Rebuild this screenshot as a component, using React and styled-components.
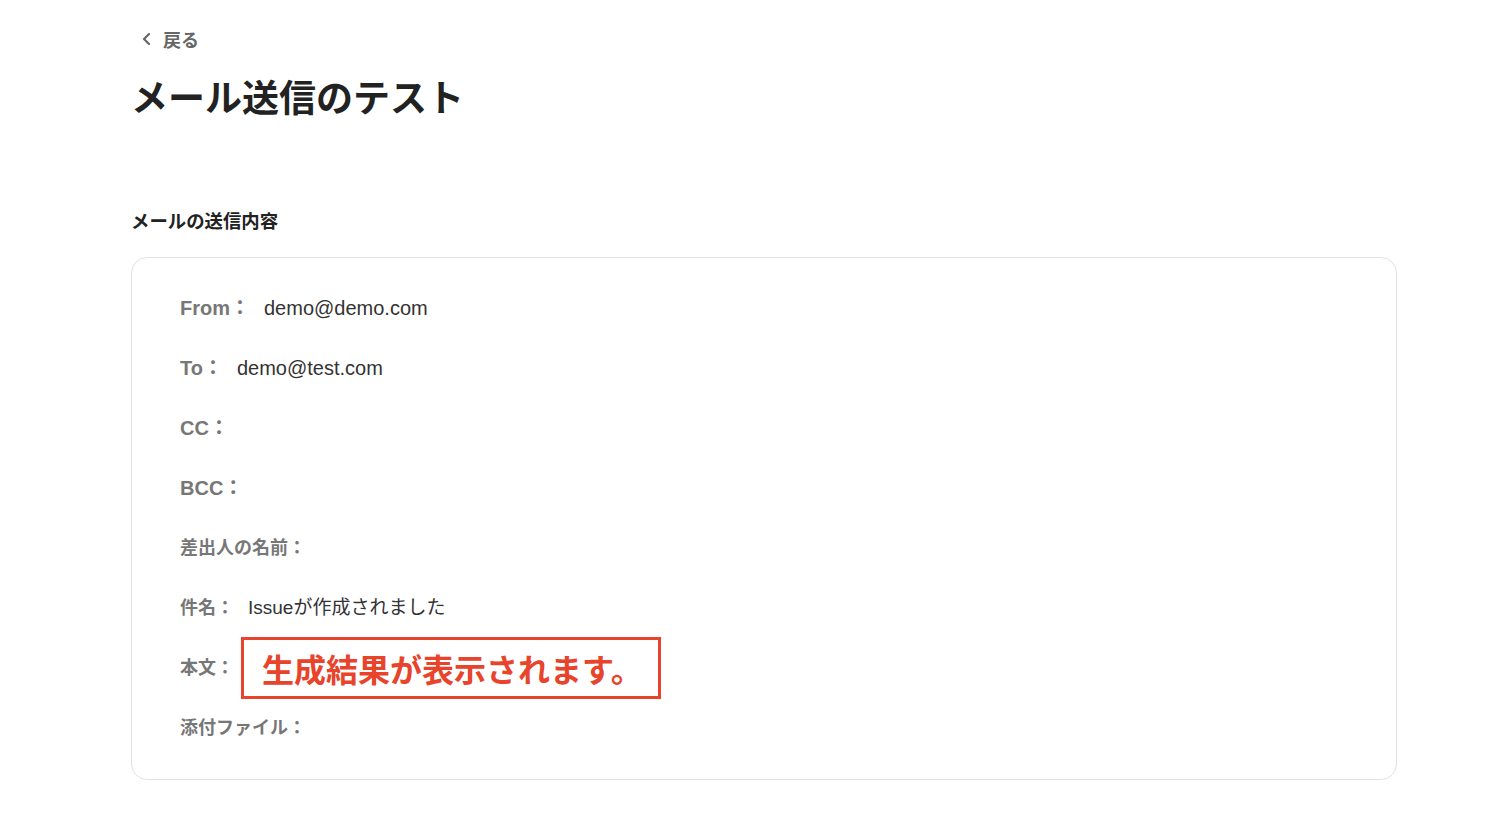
import React from "react";
import styled, { createGlobalStyle } from "styled-components";

const GlobalStyle = createGlobalStyle`
  body {
    margin: 0;
    background: #ffffff;
    font-family: "Liberation Sans", "Noto Sans CJK JP", sans-serif;
    color: #222222;
  }
`;

const Page = styled.div`
  padding: 25px 101px 40px 131px;
`;

const BackLink = styled.a`
  display: inline-flex;
  align-items: center;
  gap: 10px;
  margin-left: 9px;
  font-size: 18px;
  font-weight: 700;
  color: #666666;
  text-decoration: none;
  cursor: pointer;
  font-family: "Noto Sans CJK JP", sans-serif;
  line-height: 28px;
`;

const Title = styled.h1`
  margin: 17px 0 0 0;
  font-size: 37px;
  line-height: 52px;
  font-weight: 700;
  color: #222222;
  font-family: "Noto Sans CJK JP", sans-serif;
`;

const SectionLabel = styled.h2`
  margin: 84px 0 0 0;
  font-size: 18.4px;
  line-height: 28px;
  font-weight: 700;
  color: #222222;
  font-family: "Noto Sans CJK JP", sans-serif;
`;

const Card = styled.div`
  margin-top: 23px;
  border: 1px solid #e2e2e2;
  border-radius: 16px;
  padding: 20px 48px 21px;
`;

const Row = styled.div`
  display: flex;
  align-items: center;
  gap: 14px;
  height: 60px;
`;

const Label = styled.span`
  font-size: ${(props) => (props.latin ? "20px" : "18px")};
  line-height: 28px;
  font-weight: 700;
  color: #777777;
  white-space: nowrap;
`;

const Value = styled.span`
  font-size: ${(props) => (props.latin ? "20px" : "19px")};
  line-height: 28px;
  color: #333333;
`;

const Highlight = styled.div`
  margin: -1px 0 -1px -7px;
  height: 62px;
  box-sizing: border-box;
  border: 3px solid #e8432b;
  padding: 0 15px 0 18px;
  display: flex;
  align-items: center;
  font-size: 32px;
  font-weight: 700;
  color: #e8432b;
  font-family: "Noto Sans CJK JP", sans-serif;
`;

const Chevron = () => (
  <svg width="13" height="14" viewBox="0 0 13 14" fill="none">
    <path
      d="M9 2L4 7L9 12"
      stroke="#666666"
      strokeWidth="2.2"
      strokeLinecap="round"
      strokeLinejoin="round"
    />
  </svg>
);

const fields = [
  { label: "From：", value: "demo@demo.com", latin: true },
  { label: "To：", value: "demo@test.com", latin: true },
  { label: "CC：", latin: true },
  { label: "BCC：", latin: true },
  { label: "差出人の名前：" },
  { label: "件名：", value: "Issueが作成されました" },
  { label: "本文：", highlight: "生成結果が表示されます。" },
  { label: "添付ファイル：" },
];

const App = () => {
  return (
    <Page>
      <GlobalStyle />
      <BackLink>
        <Chevron />
        戻る
      </BackLink>
      <Title>メール送信のテスト</Title>
      <SectionLabel>メールの送信内容</SectionLabel>
      <Card>
        {fields.map((f) => (
          <Row key={f.label}>
            <Label latin={f.latin}>{f.label}</Label>
            {f.value && <Value latin={f.latin}>{f.value}</Value>}
            {f.highlight && <Highlight>{f.highlight}</Highlight>}
          </Row>
        ))}
      </Card>
    </Page>
  );
};

export default App;
